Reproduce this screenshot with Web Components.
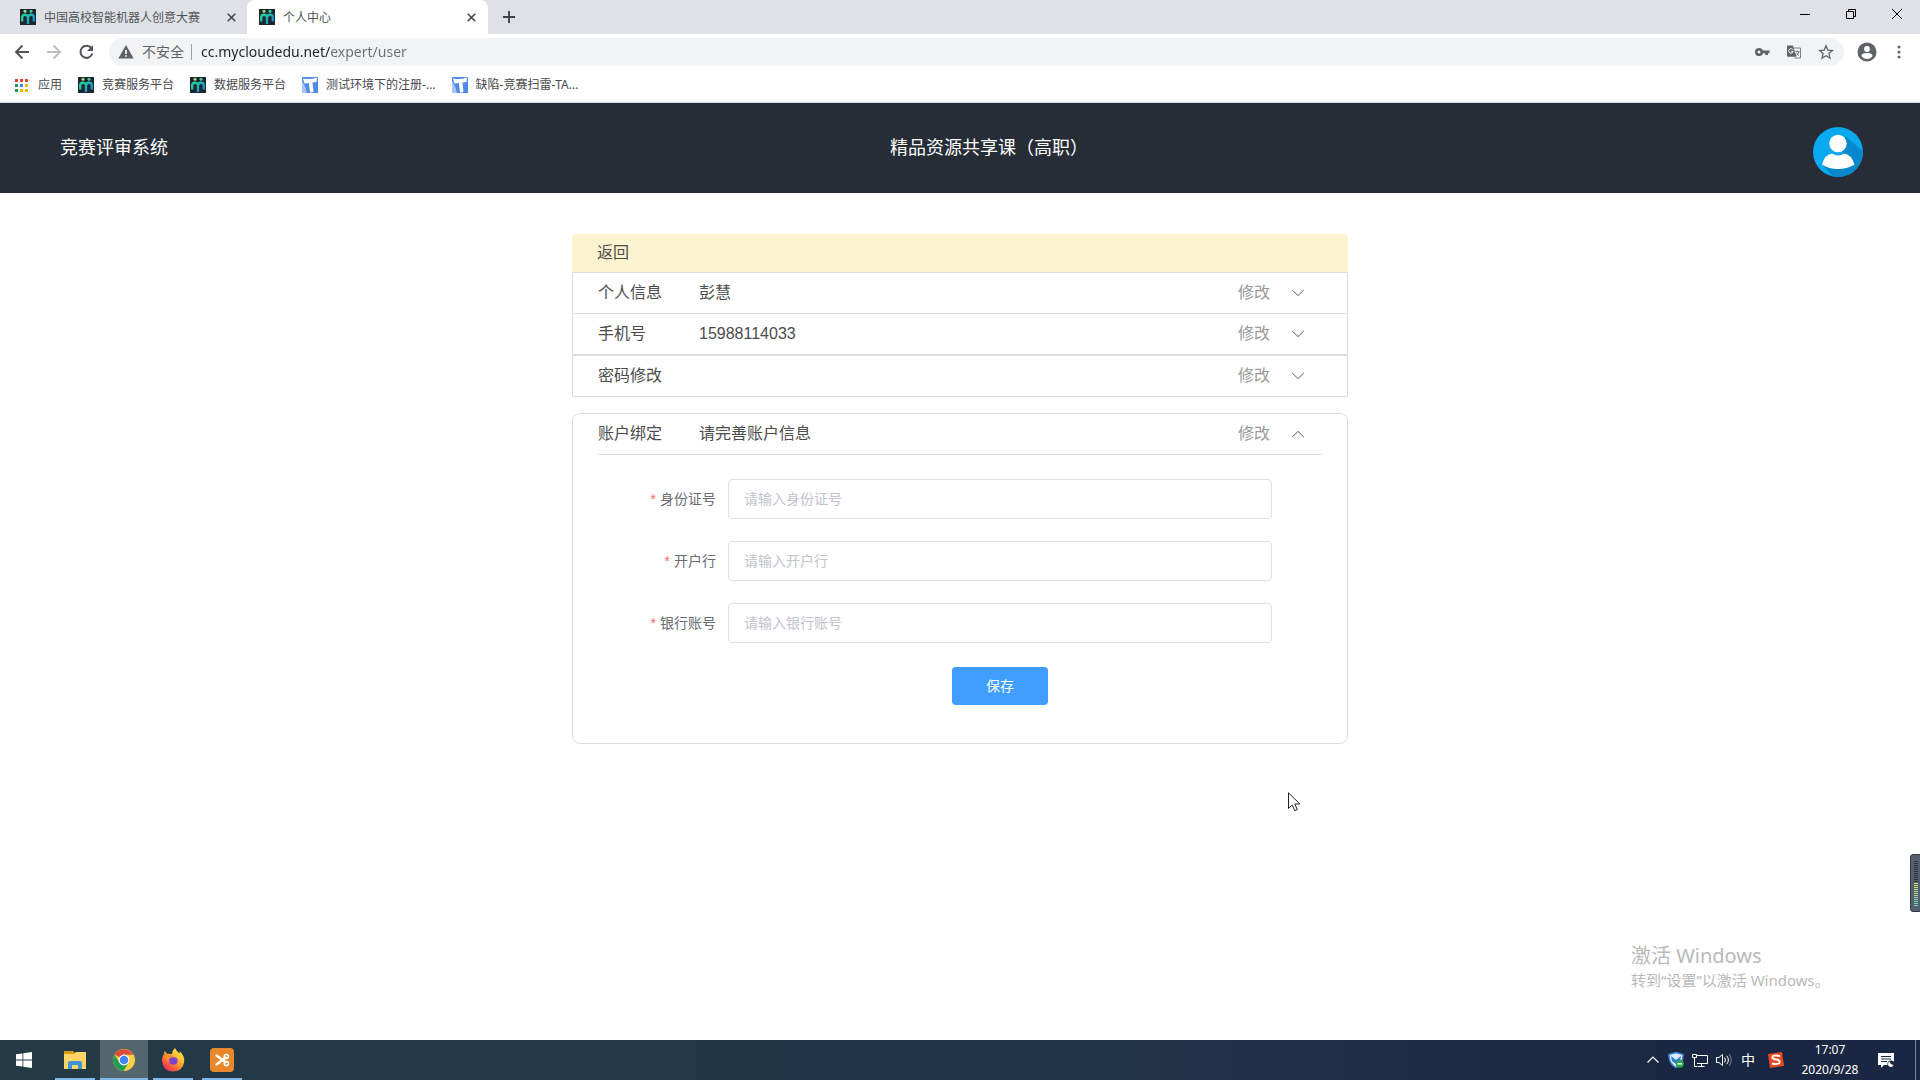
<!DOCTYPE html>
<html lang="zh-CN">
<head>
<meta charset="utf-8">
<title>个人中心</title>
<style>
  html, body { margin: 0; }
  body {
    --ui: "Noto Sans", "Noto Sans CJK SC", sans-serif;
    --page: "Liberation Sans", "Noto Sans CJK SC", sans-serif;
    font-family: var(--page);
    background: #fff;
  }
</style>
</head>
<body>
<desktop-screen>
  <browser-chrome slot="browser">
    <browser-tab slot="tab">中国高校智能机器人创意大赛</browser-tab>
    <browser-tab slot="tab" active>个人中心</browser-tab>
    <book-mark slot="mark" icon="apps">应用</book-mark>
    <book-mark slot="mark" icon="m">竞赛服务平台</book-mark>
    <book-mark slot="mark" icon="m">数据服务平台</book-mark>
    <book-mark slot="mark" icon="t">测试环境下的注册-...</book-mark>
    <book-mark slot="mark" icon="t">缺陷-竞赛扫雷-TA...</book-mark>
  </browser-chrome>
  <site-header slot="page"><span slot="brand">竞赛评审系统</span>精品资源共享课（高职）</site-header>
  <user-center slot="page"></user-center>
  <task-bar slot="taskbar"></task-bar>
</desktop-screen>

<script>
const define = (name, html, setup) => {
  const tpl = document.createElement('template');
  tpl.innerHTML = html;
  customElements.define(name, class extends HTMLElement {
    constructor() {
      super();
      this.attachShadow({ mode: 'open' }).appendChild(tpl.content.cloneNode(true));
    }
    connectedCallback() { if (setup) setup(this, this.shadowRoot); }
  });
};

const reset = `*{box-sizing:border-box} button{font:inherit;color:inherit;background:none;border:0;padding:0;cursor:default} a{color:inherit;text-decoration:none} svg{display:block;flex:none}`;

const icons = {
  m: `<svg width="16" height="16" viewBox="0 0 16 16"><defs><linearGradient id="g" gradientUnits="userSpaceOnUse" x1="2" y1="4" x2="14" y2="15"><stop offset="0" stop-color="#2fd08a"/><stop offset=".5" stop-color="#18b8b4"/><stop offset="1" stop-color="#1580d8"/></linearGradient></defs><rect width="16" height="16" fill="#1f252e"/><circle cx="5" cy="2.200" r="1.500" fill="#9be583"/><circle cx="11" cy="2.200" r="1.500" fill="#3bd0a0"/><path d="M2.200 12.500V8.500Q2.200 5.700 5 5.700T8 8.500V15M8 8.500q0-2.800 3-2.800t2.800 2.800v4" fill="none" stroke="url(#g)" stroke-width="2.400"/></svg>`,
  t: `<svg width="16" height="16" viewBox="0 0 16 16"><rect width="16" height="16" fill="#4f8ae8"/><path d="M0 4l3 5 2 7H0z" fill="#a8c6f5"/><path d="M1 1.500Q8 3 15 .5L14.500 5 10.500 5.500 11.500 15 8 15.500 6.800 6 2.500 6.500z" fill="#fff"/></svg>`,
  apps: `<svg width="16" height="16" viewBox="0 0 16 16"><g fill="#db4437"><path d="M1 2h3v3H1zM6 2h3v3H6zM11 2h3v3h-3z"/></g><path d="M1 7h3v3H1zM1 12h3v3H1z" fill="#0f9d58"/><path d="M6 7h3v3H6z" fill="#4285f4"/><path d="M11 7h3v3h-3zM6 12h3v3H6zM11 12h3v3h-3z" fill="#f4b400"/></svg>`
};

define('desktop-screen', `<style>${reset}
  :host{display:flex;flex-direction:column;min-height:100vh;position:relative;overflow:hidden}
  main{flex:1}
  .activate{position:absolute;right:91px;bottom:90px;width:198px;font-family:var(--ui);color:#b9b9b9;white-space:nowrap}
  .activate p{margin:0;font-size:20px;line-height:28px}
  .activate p+p{font-size:15px;line-height:20px}
  .meter{position:absolute;right:0;bottom:168px}
  .pointer{position:absolute;left:1288px;top:792px}
</style>
<slot name="browser"></slot>
<main><slot name="page"></slot></main>
<slot name="taskbar"></slot>
<div class="activate"><p>激活 Windows</p><p>转到“设置”以激活 Windows。</p></div>
<svg class="meter" width="10" height="58" viewBox="0 0 10 58"><defs><linearGradient id="v" x2="0" y2="1"><stop stop-color="#dce66e"/><stop offset="1" stop-color="#5fd8bc"/></linearGradient></defs><path d="M10 .5H3Q.5.500.5 3v52q0 2.500 2.500 2.500h7" fill="#565f6e" stroke="#343b47"/><path d="M6 7v22" stroke="#2f3540" stroke-width="4" stroke-dasharray="1 1"/><rect x="4" y="29" width="4" height="24" fill="url(#v)"/><path d="M6 30v23" stroke="#565f6e" stroke-width="4" stroke-dasharray="1 1"/></svg>
<svg class="pointer" width="13" height="20" viewBox="0 0 13 20"><path d="M.5.800v15.700L4.200 13l2.600 5.700 2.500-1.100L6.800 12h5z" fill="#fff" stroke="#222"/></svg>`);

define('browser-tab', `<style>${reset}
  :host{box-sizing:border-box;display:flex;align-items:center;width:244px;height:34px;padding:0 11px 0 17px;font:12px/16px var(--ui);color:#505357}
  :host([active]){background:#fff;border-radius:8px 8px 0 0;width:241px;padding:0 12px}
  .title{flex:1;display:flex;align-items:center;gap:8px;text-align:left;white-space:nowrap}
  .title span{padding-top:1px}
</style>
<button class="title" role="tab">${icons.m}<span><slot></slot></span></button>
<button aria-label="关闭标签页"><svg width="9" height="9" viewBox="0 0 9 9"><path d="M.7.700l7.600 7.600M8.300.700L.7 8.300" stroke="#3c4043" stroke-width="1.500"/></svg></button>`);

define('book-mark', `<style>${reset}
  :host{display:block;font:12px/16px var(--ui);color:#45484c}
  a{display:flex;align-items:center;gap:8px;white-space:nowrap}
</style><a href="#"><span id="i"></span><span><slot></slot></span></a>`,
  (el, root) => { root.getElementById('i').innerHTML = icons[el.getAttribute('icon')]; });

define('browser-chrome', `<style>${reset}
  :host{display:block;font-family:var(--ui);border-bottom:1px solid #d3d6da}
  .tabs{display:flex;height:34px;background:#dee1e6;padding-left:3px}
  .plus{margin-left:14px;width:14px}
  .win{margin-left:auto;display:flex;align-items:center;padding:0 17px 6px 0;gap:34px}
  .win svg{display:block}
  .bar{display:flex;align-items:center;height:36px;padding:0 13px 0 14px}
  .nav{display:flex;gap:16px;margin-right:14px}
  .omni{flex:1;display:flex;align-items:center;height:28px;border-radius:14px;background:#f1f3f4;padding:0 10px 0 9px;font-size:14px;color:#5f6368}
  .safe{display:flex;align-items:center;gap:8px;line-height:20px}
  .safe span{padding-right:8px;margin-right:9px;position:relative}
  .safe span::after{content:"";position:absolute;right:0;top:2px;height:16px;width:1px;background:#9aa0a6}
  input{flex:1;min-width:0;height:20px;border:0;padding:0;outline:0;font:14px/20px var(--ui);background:linear-gradient(90deg,#202124 var(--host-end),#6b6f73 var(--host-end));--host-end:130px;-webkit-background-clip:text;background-clip:text;-webkit-text-fill-color:transparent}
  .acts{display:flex;gap:16px}
  .right{display:flex;align-items:center;gap:14px;margin-left:13px}
  .marks{display:flex;height:32px;align-items:center;gap:16px;padding:0 14px 2px}
</style>
<div class="tabs" role="tablist"><slot name="tab"></slot>
  <button class="plus" aria-label="新标签页"><svg width="14" height="14" viewBox="0 0 14 14"><path d="M7 1v12M1 7h12" stroke="#3c4043" stroke-width="1.800"/></svg></button>
  <div class="win">
    <button aria-label="最小化"><svg width="12" height="12" viewBox="0 0 12 12"><path d="M1 6.500h10" stroke="#000"/></svg></button>
    <button aria-label="还原"><svg width="12" height="12" viewBox="0 0 12 12"><path d="M1.500 3.500h7v7h-7zM3.500 3V1.500h7v7H9" fill="none" stroke="#000"/></svg></button>
    <button aria-label="关闭"><svg width="12" height="12" viewBox="0 0 12 12"><path d="M1 1l10 10M11 1L1 11" stroke="#000"/></svg></button>
  </div></div>
<div class="bar">
  <div class="nav">
    <button aria-label="后退"><svg width="16" height="16" viewBox="0 0 16 16"><path d="M15 8H2.500M8.500 1.500L2 8l6.500 6.500" fill="none" stroke="#50545a" stroke-width="1.900"/></svg></button>
    <button aria-label="前进"><svg width="16" height="16" viewBox="0 0 16 16"><path d="M1 8h12.500M7.500 1.500L14 8l-6.500 6.500" fill="none" stroke="#bcbec2" stroke-width="1.900"/></svg></button>
    <button aria-label="重新加载"><svg width="17" height="16" viewBox="0 0 17 16"><path d="M13.300 4.200A6 6 0 1 0 14.300 9.500" fill="none" stroke="#50545a" stroke-width="2"/><path d="M15 1v6H9z" fill="#50545a"/></svg></button>
  </div>
  <div class="omni">
    <label class="safe" for="url"><svg width="16" height="14" viewBox="0 0 16 14"><path d="M8 0l7.700 13.500H.3z" fill="#5f6368"/><path d="M7.200 5h1.600v4H7.200zM7.200 10.200h1.600v1.600H7.200z" fill="#fff"/></svg><span>不安全</span></label>
    <input id="url" type="text" value="cc.mycloudedu.net/expert/user">
    <div class="acts">
      <button aria-label="密码"><svg width="16" height="16" viewBox="0 0 16 16"><circle cx="5" cy="8" r="2.800" fill="none" stroke="#5f6368" stroke-width="2.600"/><path d="M8 6.500h7.500v2.700H14V11h-2.800V9.200H8z" fill="#5f6368"/></svg></button>
      <button aria-label="翻译"><svg width="16" height="16" viewBox="0 0 16 16"><path d="M7.500 4h7v10h-6" fill="none" stroke="#7b7f84"/><path d="M1 1.500h6l3.500 11.200H2q-1 0-1-1z" fill="#5f6368"/><path d="M7 5.700A2.300 2.300 0 1 0 7.300 7.400H5.200" fill="none" stroke="#fff"/><path d="M9.500 7.500h4M11.500 6.500v1M13 7.500q-.7 2.500-2.500 4M10.500 8.500q1 2 2.500 3" fill="none" stroke="#5f6368" stroke-width=".8"/></svg></button>
      <button aria-label="收藏"><svg width="16" height="16" viewBox="0 0 16 16"><path d="M8 1.800l1.800 4.300 4.700.4-3.600 3.100 1.100 4.600L8 11.800l-4 2.400 1.100-4.600L1.500 6.500l4.700-.4z" fill="none" stroke="#5f6368" stroke-width="1.300"/></svg></button>
    </div>
  </div>
  <div class="right">
    <button aria-label="用户"><svg width="20" height="20" viewBox="0 0 20 20"><circle cx="10" cy="10" r="9.500" fill="#5f6368"/><circle cx="10" cy="7" r="2.900" fill="#fff"/><path d="M4.500 14q0-3 5.500-3t5.500 3Q13.500 17 10 17t-5.500-3z" fill="#fff"/></svg></button>
    <button aria-label="菜单"><svg width="16" height="16" viewBox="0 0 16 16"><g fill="#5f6368"><circle cx="8" cy="3" r="1.500"/><circle cx="8" cy="8" r="1.500"/><circle cx="8" cy="13" r="1.500"/></g></svg></button>
  </div>
</div>
<div class="marks"><slot name="mark"></slot></div>`);

define('site-header', `<style>${reset}
  :host{display:flex;justify-content:space-between;align-items:center;height:90px;padding:0 54px 0 60px;background:#262d37;color:#fff;font-size:18px;line-height:24px}
  a{margin-top:8px;padding:0 3px}
</style>
<slot name="brand"></slot><span><slot></slot></span>
<a href="#" aria-label="个人中心"><svg width="50" height="50" viewBox="0 0 50 50"><defs><clipPath id="c"><circle cx="25" cy="25" r="25"/></clipPath></defs><g clip-path="url(#c)"><rect width="50" height="50" fill="#08a9ee"/><path d="M32 9l20 17v26H22L10 38l20-12z" fill="#0787cc"/></g><circle cx="25" cy="16.500" r="8.700" fill="#fff"/><path d="M9 37.500Q12 27 19 26.500q6 4 12 0 7 .5 10.500 11Q34 42 25 42T9 37.500z" fill="#fff"/></svg></a>`);

define('info-row', `<style>${reset}
  :host{display:flex;align-items:center;height:40px;padding:0 42px 0 25px;font-size:16px;line-height:24px;color:#4c4c4c}
  .k{width:101px}
  .v{flex:1}
  button{display:flex;align-items:center;gap:21px;color:#999}
  :host([open]) svg{transform:rotate(180deg)}
</style>
<span class="k"><slot name="k"></slot></span><span class="v"><slot></slot></span>
<button><span>修改</span><svg width="14" height="14" viewBox="0 0 14 14"><path d="M1.200 4L7 9.600 12.800 4" fill="none" stroke="#5c5c5c"/></svg></button>`);

define('form-field', `<style>${reset}
  :host{display:flex;align-items:center;gap:12px;font-size:14px;line-height:20px}
  label{width:118px;text-align:right;color:#6a6c72}
  label::before{content:"*";color:#f56c6c;margin-right:4px}
  input{flex:1;min-width:0;height:40px;border:1px solid #dcdfe6;border-radius:4px;padding:0 15px;font:inherit;color:#606266;outline:0}
  input::placeholder{color:#c0c4cc;opacity:1}
</style><label for="f"></label><input id="f" type="text" required>`,
  (el, root) => {
    const name = el.getAttribute('label');
    root.querySelector('label').textContent = name;
    root.querySelector('input').placeholder = '请输入' + name;
  });

define('user-center', `<style>${reset}
  :host{display:block;width:776px;max-width:100%;margin:41px auto 0}
  .back{display:block;height:38px;padding:0 25px;line-height:38px;font-size:16px;color:#4c4c4c;background:#fcf3cf;border-radius:4px 4px 0 0}
  section{border:1px solid #dcdcde}
  .line{border-top:1px solid #dcdcde}
  .bind{margin-top:16px;border-radius:8px}
  .bind .line{margin:0 25px}
  form{display:flex;flex-direction:column;gap:22px;padding:24px 75px 38px 25px}
  .save{align-self:center;width:96px;height:38px;margin:2px 0 0 130px;border-radius:4px;background:#409eff;color:#fff;font-size:14px;line-height:20px}
</style>
<a class="back" href="#">返回</a>
<section>
  <info-row><span slot="k">个人信息</span>彭慧</info-row>
  <div class="line"></div>
  <info-row><span slot="k">手机号</span>15988114033</info-row>
</section>
<section><info-row><span slot="k">密码修改</span></info-row></section>
<section class="bind">
  <info-row open><span slot="k">账户绑定</span>请完善账户信息</info-row>
  <div class="line"></div>
  <form>
    <form-field label="身份证号"></form-field>
    <form-field label="开户行"></form-field>
    <form-field label="银行账号"></form-field>
    <button class="save" type="button">保存</button>
  </form>
</section>`);

define('task-bar', `<style>${reset}
  :host{display:flex;height:40px;background:linear-gradient(90deg,#243a44,#21354a 55%,#1a2742 88%);color:#fff;font-family:var(--ui);font-size:12px}
  .apps{display:flex;gap:1px}
  .apps button{width:48px;display:flex;align-items:center;justify-content:center;background:linear-gradient(#7fb6e8,#7fb6e8) center bottom/40px 2px no-repeat}
  .apps .start{background:none;margin-right:2px}
  .apps .on{background-color:#53656d;background-size:48px 2px}
  .tray{margin-left:auto;display:flex;align-items:center;gap:8px}
  .tray .ime{font-size:14px;line-height:20px;width:16px;margin:0 4px 0 0}
  .clock{text-align:center;line-height:20px;width:60px;margin:0 10px 0 8px}
  .tray .edge{width:5px;height:40px;border-left:1px solid #7d8798;margin-left:12px}
</style>
<div class="apps">
  <button class="start" aria-label="开始"><svg width="16" height="16" viewBox="0 0 16 16"><path d="M0 2.300L6.500 1.400V7.500H0zM7.300 1.300L16 0v7.500H7.300zM0 8.500h6.500v6.100L0 13.700zM7.300 8.500H16V16l-8.700-1.300z" fill="#fff"/></svg></button>
  <button aria-label="文件资源管理器"><svg width="22" height="20" viewBox="0 0 22 20"><path d="M0 1h9l2 2h11v15H0z" fill="#d99c17"/><path d="M0 4h10l2-2h10v17H0z" fill="#fbd667"/><path d="M4 19v-6q0-2 2-2h10q2 0 2 2v6h-4v-4H8v4z" fill="#3f94d8"/></svg></button>
  <button class="on" aria-label="Chrome"><svg width="24" height="24" viewBox="0 0 24 24"><circle cx="12" cy="12" r="11" fill="#fdcf3f"/><path d="M12 12L2.500 6.500A11 11 0 0 1 21.500 6.700H12z" fill="#dd4b3e"/><path d="M2.500 6.500A11 11 0 0 0 11.500 23l5-8.300L12 12 7.500 14.700z" fill="#1f9d57"/><circle cx="12" cy="12" r="5.400" fill="#fff"/><circle cx="12" cy="12" r="4.300" fill="#4285f4"/></svg></button>
  <button aria-label="Firefox"><svg width="24" height="24" viewBox="0 0 24 24"><defs><linearGradient id="ff" x1=".85" y1=".1" x2=".2" y2=".95"><stop stop-color="#fff04d"/><stop offset=".4" stop-color="#ffae2b"/><stop offset=".7" stop-color="#ff6a35"/><stop offset="1" stop-color="#ee2a66"/></linearGradient></defs><path d="M14 0q1 2.500 4.500 5.500.5-1.500 0-2.500 5 4.500 4.700 10.500Q22 23 12 23.500 1.500 23 1 12.500 1 8.500 3 6l.5-3L6.500 6q2.500-.8 4.500.2Q11 2.500 14 0z" fill="url(#ff)"/><path d="M7.500 12q0-4 4-4.500l-.5 1.700h2.500q3 .5 3.300 3-.5 4.500-4.500 4.500-4.800-.4-4.800-4.700z" fill="#7b42d6"/><path d="M3 7.500Q5.500 6 8 7.500l3.300.7Q10.500 11 7.500 11.200q.5 1.800 2.500 2.600-3.500.5-5-2.600z" fill="#ff8f24"/></svg></button>
  <button aria-label="截图"><svg width="24" height="24" viewBox="0 0 24 24"><rect width="24" height="24" rx="4" fill="#e8872b"/><path d="M6.500 7.500l9 6.500M6.500 16.500l9-7" stroke="#fff" stroke-width="2.400" stroke-linecap="round"/><g fill="none" stroke="#fff" stroke-width="1.500"><circle cx="16.300" cy="8.500" r="2.100"/><circle cx="16.300" cy="15.500" r="2.100"/></g></svg></button>
</div>
<div class="tray">
  <button aria-label="显示隐藏的图标"><svg width="14" height="16" viewBox="0 0 14 16"><path d="M1.500 10.500L7 5l5.500 5.500" fill="none" stroke="#fff" stroke-width="1.200"/></svg></button>
  <button aria-label="安全"><svg width="16" height="16" viewBox="0 0 16 16"><path d="M1 2.500L8 .500l7 2q.5 9-7 13Q.500 11.500 1 2.500z" fill="#dcebfa" stroke="#3c86e0" stroke-width="1.400"/><path d="M3 4l5 4 5-4-1 5-4 3-4-3z" fill="#2f78dc"/><circle cx="11.800" cy="11.800" r="4" fill="#25a647"/><path d="M9.500 11.800h4.600" stroke="#fff" stroke-width="1.500"/></svg></button>
  <button aria-label="网络"><svg width="16" height="16" viewBox="0 0 16 16"><path d="M4 3.500h11.500v8H5M9.500 11.500v3M5.500 14.500h7M.5 2.500h4v3h-4zM2.500 5.500v9H5" fill="none" stroke="#fff"/></svg></button>
  <button aria-label="音量"><svg width="16" height="16" viewBox="0 0 16 16"><path d="M.5 5.500h2.500L6.500 2.500v11L3 10.500H.5z" fill="none" stroke="#fff"/><path d="M8.500 5.500q2 2.500 0 5M10.800 3.800q3.200 4.200 0 8.400" fill="none" stroke="#fff"/><path d="M13 2q4.500 6 0 12" fill="none" stroke="#7c8594"/></svg></button>
  <button class="ime">中</button>
  <button aria-label="搜狗输入法"><svg width="16" height="16" viewBox="0 0 16 16"><path d="M0 2L14 0l2 14-14 2z" fill="#e8481f"/><path d="M12 4Q4 2.500 4.500 5.500 5 7.500 8.500 7.500q3.500.5 3 3-1 2.500-7.500 1" fill="none" stroke="#fff" stroke-width="2"/></svg></button>
  <div class="clock">17:07<br>2020/9/28</div>
  <button aria-label="通知"><svg width="17" height="16" viewBox="0 0 17 16"><path d="M0 1h16v12H6l-3 3v-3H0z" fill="#fff"/><path d="M3 4.500h10M3 7h10M3 9.500h6" stroke="#1b2944"/><circle cx="13" cy="12" r="3.600" fill="#1b2944"/><path d="M12 9.500a2.800 2.800 0 1 0 3.500 3.300A3 3 0 0 1 12 9.500z" fill="#fff"/></svg></button>
  <div class="edge"></div>
</div>`);
</script>
</body>
</html>
